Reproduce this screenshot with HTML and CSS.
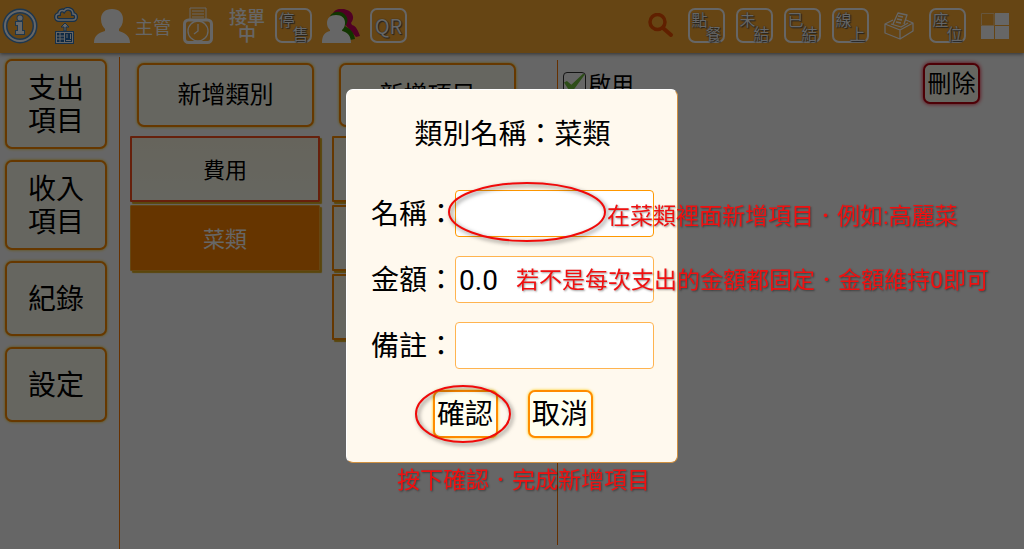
FILE: index.html
```html
<!DOCTYPE html>
<html lang="zh-Hant">
<head>
<meta charset="utf-8">
<meta name="viewport" content="width=device-width, initial-scale=1">
<title>支出項目</title>
<link rel="stylesheet" href="styles.css">
</head>
<body>
<header class="topbar">
  <div class="tools tools-left">
    <button class="icon" aria-label="資訊"><svg width="36" height="36" viewBox="0 0 36 36" fill="none"><circle cx="18" cy="18" r="15" stroke="#4a8ac8" stroke-width="5"/><circle cx="18" cy="18" r="15" stroke="#fff" stroke-width="2"/><g stroke="#4a8ac8" stroke-width="2" fill="#fff" paint-order="stroke"><circle cx="18" cy="10" r="2.5"/><path d="M14 14h6v9h2v3h-8v-3h2v-6h-2z"/></g></svg></button>
    <button class="icon cloud" aria-label="雲端上傳"><svg width="24" height="38" viewBox="0 0 24 38" fill="none"><path d="M5 13c-4 0-4-6 0-6 0-4 4-4 5-3 3-4 9-2 9 3 4 0 4 6 0 6z" stroke="#3878b8" stroke-width="4"/><path d="M5 13c-4 0-4-6 0-6 0-4 4-4 5-3 3-4 9-2 9 3 4 0 4 6 0 6z" stroke="#fff" stroke-width="1.5"/><path d="M11 16l4 4h-3v4h-2v-4H7z" fill="#fff" stroke="#3878b8"/><rect x="1" y="24" width="19" height="13" fill="#3878b8"/><rect x="2.5" y="25.500" width="16" height="10" fill="#2468aa" stroke="#fff"/><path d="M3 29h7M3 32h7M6 26v9M10.500 26v9M13 27v4M16.500 27v5M12 33.500h5" stroke="#fff"/></svg></button>
    <button class="user" aria-label="主管"><svg width="36" height="34" viewBox="0 0 36 34"><path d="M18 0c-7 0-11 4-11 10 0 5 2 8 4 10v2C5 24 0 26 0 34h36c0-8-6-10-11-12v-2c2-2 4-5 4-10 0-6-4-10-11-10z" fill="#fff"/></svg><span>主管</span></button>
    <button class="icon clock" aria-label="打卡"><svg width="30" height="37" viewBox="0 0 30 37" fill="none" stroke="#fff"><path d="M7 12V1h16v11M9 4h12M9 7h12M9 10h12"/><rect x="1.5" y="13" width="27" height="22.500" rx="4" stroke-width="3"/><circle cx="15" cy="24" r="10" stroke-width="1.3"/><path d="M15 17v7l-4 3" stroke-width="1.3"/></svg></button>
    <button class="orders">接單<br>中</button>
    <button class="tile"><span>停</span><span>售</span></button>
    <button class="icon" aria-label="會員"><svg width="38" height="34" viewBox="0 0 38 34"><path d="M11 4C14-1 21-1 25 1c6 2 8 8 4 13l1 2c4 1 6 5 8 11l-4 1L20 12z" fill="#c8005a"/><path d="M8 7c4-6 13-5 16 0 3 4 1 8-1 10 5 3 9 6 10 13l-5 1L14 14z" fill="#2c8500"/><path d="M14 6c-6 0-9 3-9 8 0 3 1 5 3 7v1c-5 1-8 4-8 12h29c0-8-4-11-9-12v-1c2-2 3-4 3-7 0-5-3-8-9-8z" fill="#fff"/></svg></button>
    <button class="tile qr">QR</button>
  </div>
  <div class="tools tools-right">
    <button class="icon search" aria-label="搜尋"><svg width="26" height="26" viewBox="0 0 26 26" fill="none" stroke="#f05000"><circle cx="9.500" cy="9" r="7.500" stroke-width="3.500"/><path d="M15 15l8 7" stroke-width="4" stroke-linecap="round"/></svg></button>
    <button class="tile"><span>點</span><span>餐</span></button>
    <button class="tile"><span>未</span><span>結</span></button>
    <button class="tile"><span>已</span><span>結</span></button>
    <button class="tile"><span>線</span><span>上</span></button>
    <button class="icon printer" aria-label="列印"><svg width="30" height="28" viewBox="0 0 30 28" fill="none" stroke="#fff" stroke-width="1.3" stroke-linejoin="round"><path d="M9 8L1 12l15 6 13-7-7-3M1 12v9l15 6V18M16 27l13-8v-8M7 12l10 3 7-4M9 12l5-11 9 2-3 9M14 4l5 1M13 7l5 1M12 10l5 1"/></svg></button>
    <button class="tile"><span>座</span><span>位</span></button>
    <button class="icon grid" aria-label="版面"><svg width="28" height="26" viewBox="0 0 28 26"><path d="M14 0h14v12H14zM0 13h13v13H0zM14 13h14v13H14z" fill="#fff"/><path d="M0.5.5H13v12H.5z" fill="none" stroke="#ffd79b"/></svg></button>
  </div>
</header>

<main class="workspace">
  <nav class="side">
    <button class="btn tall">支出<br>項目</button>
    <button class="btn tall">收入<br>項目</button>
    <button class="btn">紀錄</button>
    <button class="btn">設定</button>
  </nav>
  <section class="lists">
    <div class="column">
      <button class="btn add">新增類別</button>
      <div class="entries">
        <button class="entry current">費用</button>
        <button class="entry selected">菜類</button>
      </div>
    </div>
    <div class="column">
      <button class="btn add">新增項目</button>
      <div class="entries">
        <button class="entry" aria-label="項目一"></button>
        <button class="entry" aria-label="項目二"></button>
        <button class="entry" aria-label="項目三"></button>
      </div>
    </div>
  </section>
  <section class="detail">
    <div class="detail-head">
      <label class="enable"><input type="checkbox" checked>啟用</label>
      <button class="btn delete">刪除</button>
    </div>
    <p class="detail-name">名稱：菜類</p>
  </section>
</main>

<div class="backdrop">
  <form class="dialog" role="dialog" aria-labelledby="title">
    <h1 id="title">類別名稱：菜類</h1>
    <div class="field active"><label for="name">名稱：</label><input id="name" type="text">
      <svg class="ring ring-name" viewBox="0 0 158 60" fill="none"><ellipse cx="79" cy="30" rx="78" ry="29"/></svg>
      <p class="note note-name">在菜類裡面新增項目．例如:高麗菜</p></div>
    <div class="field"><label for="amount">金額：</label><input id="amount" type="text" value="0.0">
      <p class="note note-amount">若不是每次支出的金額都固定．金額維持0即可</p></div>
    <div class="field"><label for="memo">備註：</label><input id="memo" type="text"></div>
    <div class="actions">
      <button class="btn" type="button">確認</button>
      <button class="btn" type="button">取消</button>
      <svg class="ring ring-ok" viewBox="0 0 96 58" fill="none"><ellipse cx="48" cy="29" rx="47" ry="28"/></svg>
    </div>
    <p class="note note-ok">按下確認．完成新增項目</p>
  </form>
</div>
</body>
</html>
```

FILE: styles.css
```css
* { box-sizing: border-box; }
body {
  margin: 0;
  min-height: 100vh;
  display: flex;
  flex-direction: column;
  background: #fff;
  color: #000;
  font-family: Roboto, "Noto Sans CJK TC", sans-serif;
}
button, input { font: inherit; color: inherit; }
button { padding: 0; margin: 0; border: 0; background: none; }
p, h1 { margin: 0; font-weight: 400; }
svg { display: block; }

.topbar {
  height: 53px;
  padding: 0 15px 2px 2px;
  display: flex;
  justify-content: space-between;
  align-items: center;
  background: #ffac32;
  color: #fff;
  box-shadow: 0 1px 4px #0008;
}
.tools { display: flex; align-items: center; }
.tools-left { gap: 10px; }
.tools-right { gap: 11px; }
.cloud { margin: 0 6px; }
.user { display: flex; align-items: center; gap: 5px; font-size: 18px; }
.clock { margin: 0 6px 0 2px; }
.orders { width: 36px; padding-bottom: 2px; font-family: "Noto Sans CJK TC", sans-serif; font-size: 18px; line-height: 17px; font-weight: 500; }
.search { margin-right: 3px; }
.printer { margin: 0 4px; }
.grid { margin-left: 4px; }
.tile {
  width: 37px;
  height: 35px;
  display: grid;
  grid-template-columns: 15px 15px;
  grid-template-rows: 14px 14px;
  place-content: center;
  align-items: center;
  border: 2px solid #fff;
  border-radius: 7px;
  font-family: "Noto Sans CJK TC", sans-serif;
  font-size: 16px;
  line-height: 14px;
  text-shadow: 0 0 1px #333, 1px 1px 1px #555;
}
.tile span:last-child { grid-area: 2 / 2; justify-self: end; }
.tile.qr { display: block; font-size: 20px; line-height: 30px; }

.workspace { flex: 1; display: flex; }
.btn {
  border: 2px solid #ff8c00;
  border-radius: 7px;
  background: #fffff0;
  box-shadow: 0 0 3px #ffc800;
}
.side {
  width: 119px;
  padding: 6px 12px 0 5px;
  display: flex;
  flex-direction: column;
  gap: 11px;
}
.side .btn { height: 75px; padding-top: 2px; font-size: 28px; line-height: 33px; }
.side .tall { height: 90px; }
.lists {
  flex: 0 0 438px;
  margin-top: 4px;
  padding: 6px 35px 0 10px;
  display: flex;
  gap: 12px;
  border-left: 1px solid #ff7800;
}
.column { flex: 1; display: flex; flex-direction: column; gap: 9px; }
.add { height: 64px; margin: 0 6px 0 7px; font-size: 24px; line-height: 58px; }
.entries { display: flex; flex-direction: column; gap: 3px; }
.entry {
  height: 66px;
  padding-bottom: 2px;
  border: 2px solid #ff8c00;
  border-radius: 1px;
  background: linear-gradient(#fffbe6, #fffff0);
  box-shadow: 2px 2px 1px #e0b020;
  font-size: 22px;
}
.current { border-color: #ff5020; }
.selected { border: 1px solid #ffb030; background: #ff8400; color: #fff; }
.detail { flex: 1; margin: 7px 0 4px; padding: 3px 44px 0 5px; border-left: 1px solid #ff7800; }
.detail-head { display: flex; justify-content: space-between; align-items: flex-start; }
.enable { display: flex; align-items: center; gap: 2px; height: 40px; font-size: 23px; }
.enable input {
  width: 23px;
  height: 23px;
  margin: 0;
  appearance: none;
  border: 1px solid #333;
  border-radius: 4px;
  position: relative;
}
.enable input::after {
  content: "";
  position: absolute;
  inset: 1px 0 2px 0;
  background: #72c040;
  clip-path: polygon(0 50%, 14% 42%, 35% 62%, 92% 0, 100% 4%, 40% 100%, 28% 100%);
}
.delete { width: 57px; height: 41px; border-color: #c00010; box-shadow: 0 0 4px #f00020; font-size: 24px; line-height: 36px; }
.detail-name { padding-top: 9px; font-size: 23px; }

.backdrop {
  position: fixed;
  inset: 0;
  padding-top: 2px;
  display: flex;
  align-items: center;
  justify-content: center;
  background: #0009;
}
.dialog {
  position: relative;
  width: 332px;
  padding: 24px 23px 24px 24px;
  border: 1px solid #d09040;
  border-top-color: #fff;
  border-left-color: #fff;
  border-radius: 7px;
  background: #fff9ee;
  font-size: 28px;
}
.dialog h1 { margin-bottom: 35px; text-align: center; font-size: 28px; line-height: 41px; }
.field { position: relative; display: flex; align-items: center; margin-bottom: 19px; }
.field label { flex: 0 0 82px; padding-top: 3px; line-height: 41px; white-space: nowrap; }
.field input {
  flex: 1;
  min-width: 0;
  height: 47px;
  padding: 3px 3px 0;
  border: 1px solid #ffb450;
  border-radius: 4px;
  background: #fff;
  outline: 0;
}
.field.active input { border-color: #ff9800; }
.actions { position: relative; display: flex; justify-content: center; gap: 30px; padding-top: 2px; }
.actions .btn { width: 65px; height: 48px; padding-top: 2px; line-height: 42px; }
.ring { position: absolute; overflow: visible; stroke: #f00a0a; stroke-width: 2; filter: drop-shadow(2px 2px 2px #0008); pointer-events: none; }
.ring-name { left: 77px; top: -8px; width: 158px; height: 60px; }
.ring-ok { left: 44px; top: -3px; width: 96px; height: 58px; }
.note {
  position: absolute;
  white-space: nowrap;
  color: #f01010;
  font-size: 23px;
  line-height: 32px;
  text-shadow: 1px 1px 2px #0006;
}
.note-name { left: 236px; top: 11px; }
.note-amount { left: 145px; top: 9px; }
.note-ok { left: 50px; top: 375px; }
```
